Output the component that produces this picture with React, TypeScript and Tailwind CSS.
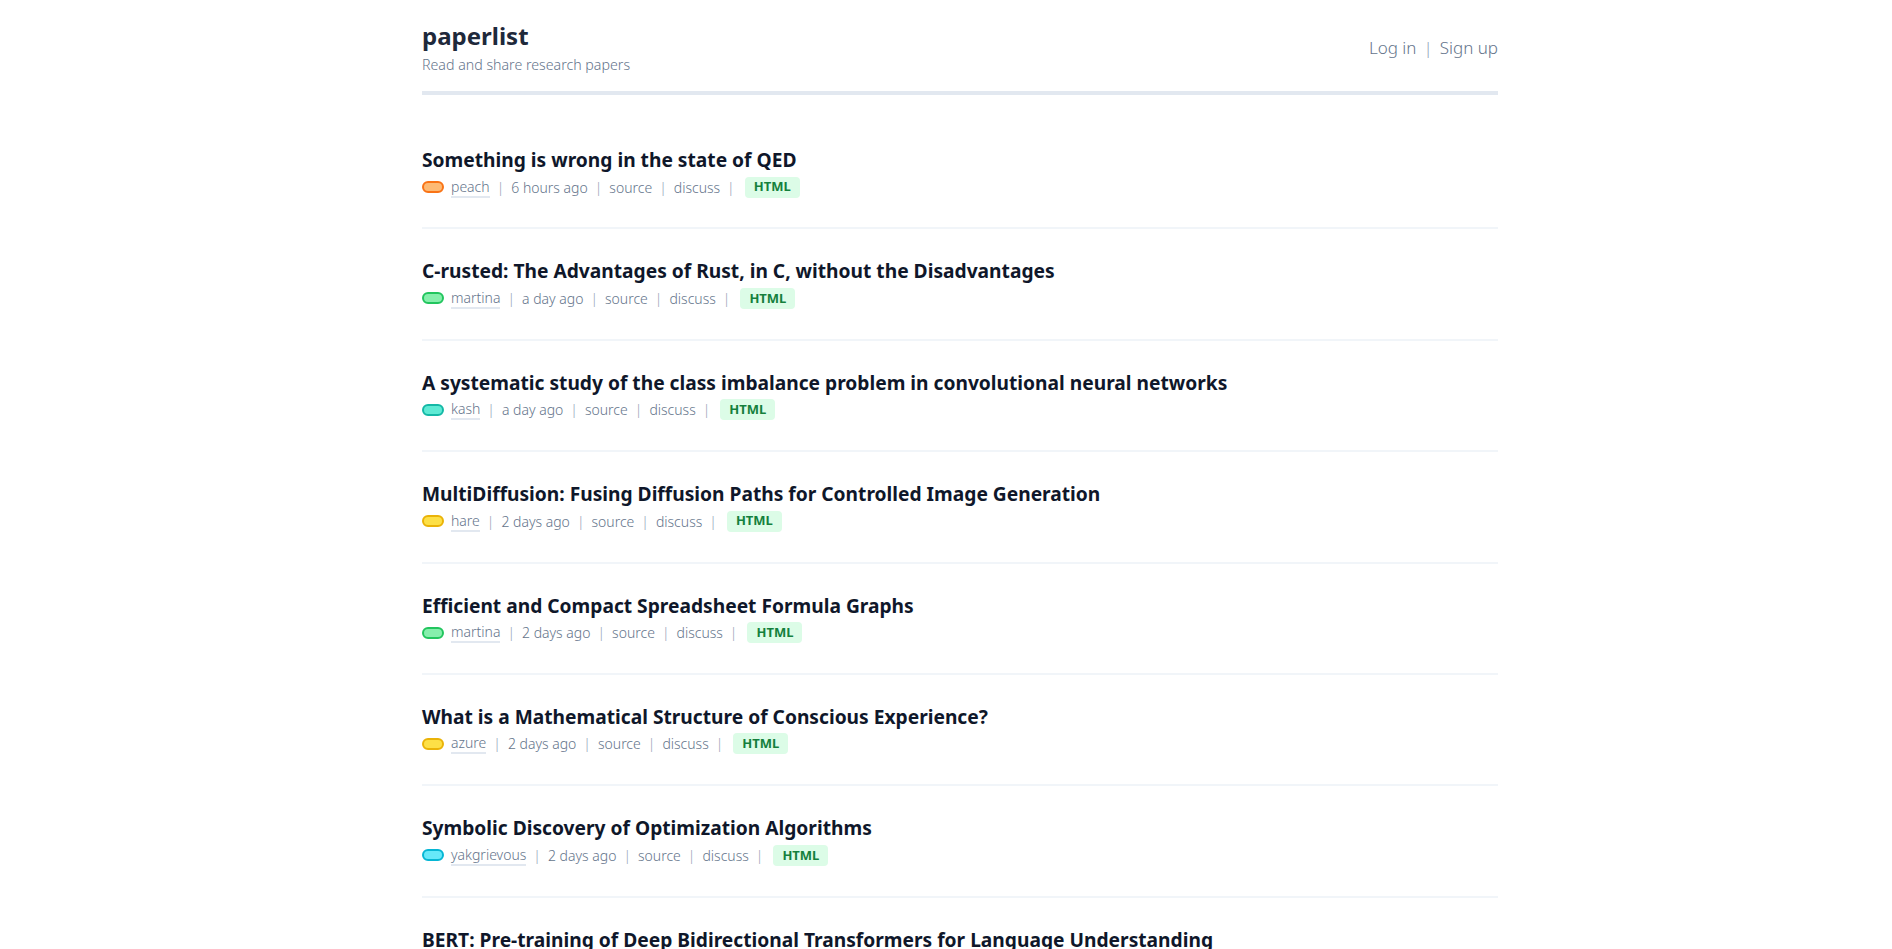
import React from "react";

type Item = { title: string; user: string; time: string; pill: string };

const items: Item[] = [
  { title: "Something is wrong in the state of QED", user: "peach", time: "6 hours ago", pill: "border-[#f97316] bg-[#fdba74]" },
  { title: "C-rusted: The Advantages of Rust, in C, without the Disadvantages", user: "martina", time: "a day ago", pill: "border-[#22c55e] bg-[#86efac]" },
  { title: "A systematic study of the class imbalance problem in convolutional neural networks", user: "kash", time: "a day ago", pill: "border-[#14b8a6] bg-[#5eead4]" },
  { title: "MultiDiffusion: Fusing Diffusion Paths for Controlled Image Generation", user: "hare", time: "2 days ago", pill: "border-[#eab308] bg-[#fde047]" },
  { title: "Efficient and Compact Spreadsheet Formula Graphs", user: "martina", time: "2 days ago", pill: "border-[#22c55e] bg-[#86efac]" },
  { title: "What is a Mathematical Structure of Conscious Experience?", user: "azure", time: "2 days ago", pill: "border-[#eab308] bg-[#fde047]" },
  { title: "Symbolic Discovery of Optimization Algorithms", user: "yakgrievous", time: "2 days ago", pill: "border-[#06b6d4] bg-[#67e8f9]" },
  { title: "BERT: Pre-training of Deep Bidirectional Transformers for Language Understanding", user: "kash", time: "3 days ago", pill: "border-[#14b8a6] bg-[#5eead4]" },
  { title: "Attention Is All You Need", user: "peach", time: "3 days ago", pill: "border-[#f97316] bg-[#fdba74]" },
];

const Sep = () => <span className="text-[#94a3b8]">|</span>;

export default function App() {
  return (
    <div className="min-h-screen bg-white" style={{ fontFamily: '"Noto Sans", "Open Sans", sans-serif' }}>
      <div className="ml-[422px] w-[1076px]">
        <header className="flex items-center justify-between pt-[20px] pb-[16px] border-b-4 border-[#e2e8f0]">
          <div>
            <div className="text-[24px] leading-[32px] font-bold text-[#1e293b]">paperlist</div>
            <div className="mt-[3px] text-[14.2px] leading-[20px] font-light text-[#64748b]">Read and share research papers</div>
          </div>
          <div className="flex items-center gap-[7px] text-[17px] leading-[28px] font-light text-[#64748b]">
            <a>Log in</a>
            <span className="text-[#94a3b8]">|</span>
            <a>Sign up</a>
          </div>
        </header>
        <main className="mt-[23px]">
          {items.map((it, i) => (
            <div key={i} className="pt-7 pb-[28.4px] border-b-2 border-[#f1f5f9]">
              <div className="text-[19.2px] leading-[28px] font-bold text-[#0f172a]">{it.title}</div>
              <div className="mt-[1px] flex items-center h-6 text-[14px] font-light text-[#64748b]">
                <span className={`inline-block w-[22px] h-[12px] rounded-full border-2 ${it.pill}`}></span>
                <span className="ml-[7px] border-b-2 border-[#e2e8f0] leading-[19px]">{it.user}</span>
                <span className="flex items-center gap-[7px] ml-[7px]">
                  <Sep />
                  <span>{it.time}</span>
                  <Sep />
                  <span>source</span>
                  <Sep />
                  <span>discuss</span>
                  <Sep />
                  <span className="ml-[3px] px-[9px] h-[21px] flex items-center rounded-[4px] bg-[#dcfce7] text-[#15803d] font-bold text-[13px]">HTML</span>
                </span>
              </div>
            </div>
          ))}
        </main>
      </div>
    </div>
  );
}
